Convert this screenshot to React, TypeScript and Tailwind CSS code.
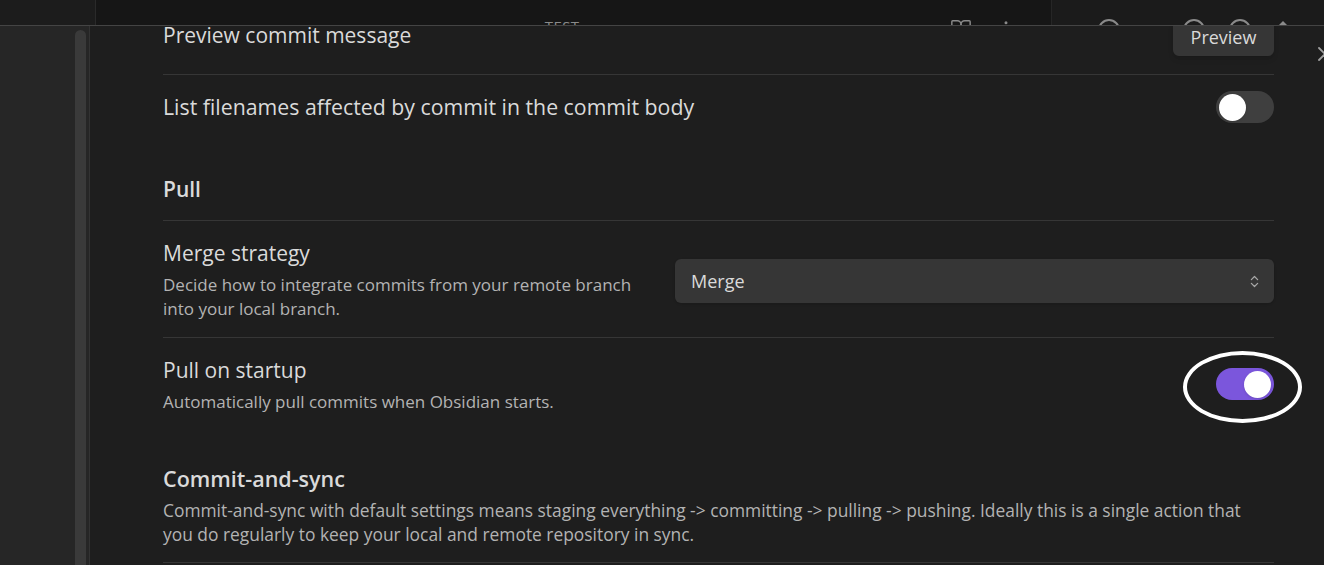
import { ChevronsUpDown, X, BookOpen, MoreVertical } from "lucide-react"

function Toggle({ on }: { on?: boolean }) {
  return (
    <div
      className={
        "flex items-center w-[58px] h-[32px] rounded-full px-[3px] shrink-0 " +
        (on ? "bg-[#7b56dc] justify-end" : "bg-[#3f3f3f] justify-start")
      }
    >
      <div className="w-[27px] h-[27px] rounded-full bg-white shadow" />
    </div>
  )
}

function TopBar() {
  return (
    <div className="flex h-[25px] shrink-0 overflow-hidden text-[#8a8a8a]">
      <div className="w-[96px] bg-[#1c1c1c] border-r border-[#2a2a2a]" />
      <div className="flex flex-1 bg-[#161616] pt-[19px]">
        <span className="ml-[30px] text-[18px] leading-none">&#8249;</span>
        <span className="ml-[36px] text-[18px] leading-none">&#8250;</span>
        <span className="ml-[372px] text-[15px] leading-none tracking-wide">TEST</span>
        <BookOpen size={22} strokeWidth={1.6} className="ml-[371px] -mt-[1px]" />
        <MoreVertical size={18} strokeWidth={2} className="ml-[25px]" />
      </div>
      <div className="flex w-[273px] bg-[#1b1b1b] border-l border-[#262626] pt-[19px]">
        <div className="ml-[46px] w-[22px] h-[22px] rounded-full border-2 border-[#8a8a8a]" />
        <div className="ml-[36px] w-[2px] h-[3px] mt-[6px] bg-[#8a8a8a]" />
        <div className="ml-[25px] w-[22px] h-[22px] rounded-full border-2 border-[#8a8a8a]" />
        <div className="ml-[24px] w-[22px] h-[22px] rounded-full border-2 border-[#8a8a8a]" />
        <div className="ml-[25px] mt-[2px] w-0 h-0 border-l-[7px] border-r-[7px] border-b-[7px] border-l-transparent border-r-transparent border-b-[#8a8a8a]" />
      </div>
    </div>
  )
}

export default function App() {
  return (
    <div
      className="w-[1324px] h-[565px] overflow-hidden flex flex-col bg-[#1e1e1e]"
      style={{ fontFamily: '"Open Sans", "Noto Sans", sans-serif' }}
    >
      <TopBar />
      <div className="flex flex-1 min-h-0 border-t border-[#444]">
        <div className="w-[90px] shrink-0 bg-[#262626] border-r border-[#333] flex">
          <div className="ml-[75px] mt-[4px] w-[11px] rounded-t-full bg-[#3a3a3a]" />
        </div>
        <div className="relative flex-1 min-w-0 overflow-hidden pl-[73px] pr-[50px]">
          <X size={24} strokeWidth={1.8} className="absolute right-[-13px] top-[16px] text-[#a0a0a0]" />

          <div className="flex items-center justify-between -mt-[8px] pb-[18px]">
            <div className="text-[21px] leading-[24px] text-[#dadada] -mt-[4px]">
              Preview commit message
            </div>
            <button className="w-[101px] h-[38px] rounded-md bg-[#363636] text-[18px] text-[#dadada] shadow-md">
              Preview
            </button>
          </div>

          <div className="flex items-center justify-between border-t border-[#363636] pt-[16px] pb-[16px]">
            <div className="text-[21.3px] leading-[24px] text-[#dadada]">
              List filenames affected by commit in the commit body
            </div>
            <Toggle />
          </div>

          <div className="pt-[38px] pb-[19px] text-[21px] leading-[24px] font-semibold text-[#dadada]">
            Pull
          </div>

          <div className="flex items-center border-t border-[#363636] pt-[20px] pb-[16px]">
            <div className="flex-1 min-w-0 pr-[30px]">
              <div className="text-[21px] leading-[24px] text-[#dadada]">Merge strategy</div>
              <div className="mt-[8px] text-[17px] leading-[24px] text-[#b3b3b3]">
                Decide how to integrate commits from your remote branch into your local branch.
              </div>
            </div>
            <div className="w-[599px] h-[44px] shrink-0 flex items-center justify-between rounded-md bg-[#363636] pl-[16px] pr-[12px] shadow">
              <span className="text-[18px] text-[#dadada]">Merge</span>
              <ChevronsUpDown size={15} strokeWidth={2} className="text-[#a8a8a8]" />
            </div>
          </div>

          <div className="flex items-center justify-between border-t border-[#363636] pt-[20px] pb-[16px]">
            <div>
              <div className="text-[21px] leading-[24px] text-[#dadada]">Pull on startup</div>
              <div className="mt-[8px] text-[17px] leading-[24px] text-[#b3b3b3]">
                Automatically pull commits when Obsidian starts.
              </div>
            </div>
            <div className="relative -mt-[4px]">
              <Toggle on />
              <div className="absolute left-[-33px] top-[-17px] w-[119px] h-[72px] rounded-[50%] border-[4px] border-white" />
            </div>
          </div>

          <div className="pt-[37px] pb-[16px] border-b border-[#363636]">
            <div className="text-[21.5px] leading-[24px] font-semibold text-[#dadada]">Commit-and-sync</div>
            <div className="mt-[7px] text-[17.4px] leading-[24px] text-[#b3b3b3] whitespace-nowrap">
              Commit-and-sync with default settings means staging everything -&gt; committing -&gt; pulling -&gt; pushing. Ideally this is a single action that
              <br />
              you do regularly to keep your local and remote repository in sync.
            </div>
          </div>
        </div>
      </div>
    </div>
  )
}
